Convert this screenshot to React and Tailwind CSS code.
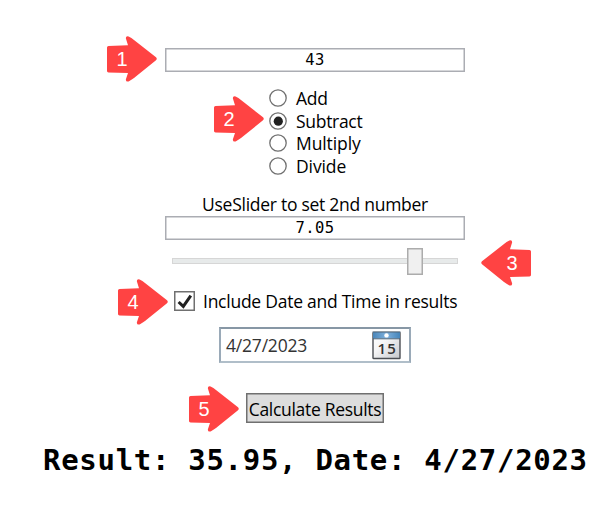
import React from "react";

function Callout({ n, place, flip }) {
  return (
    <div className={`absolute h-[46px] w-[50px] ${place}`}>
      <svg viewBox="0 0 50 46" className={`h-full w-full ${flip ? "-scale-x-100" : ""}`}>
        <path
          d="M1.5 10.1 L21 9.2 L18.9 2.6 Q18.6 -0.4 21.6 0.4 Q24.5 1.8 27 3.9 L49 21.3 Q50.5 22.8 49 24.3 L27 42 Q24.5 44 21.6 45.4 Q18.6 46.2 18.9 43.2 L21 37 L1.5 36.5 Q0 36.4 0 35 V11.5 Q0 10.2 1.5 10.1Z"
          fill="#ff4343"
        />
      </svg>
      <span
        className={`absolute top-[12px] w-[16px] text-center font-['Liberation_Sans',sans-serif] text-[20px] leading-[23px] text-white ${flip ? "left-[23px]" : "left-[7px]"}`}
      >
        {n}
      </span>
    </div>
  );
}

function Radio({ label, checked, tracking }) {
  return (
    <div className="flex h-[22.5px] items-center gap-[9px]">
      <svg viewBox="0 0 18 18" className="size-[18px] shrink-0">
        <circle cx="9" cy="9" r="8.2" fill="#fff" stroke="#707070" strokeWidth="1.3" />
        {checked && <circle cx="9.3" cy="9.2" r="4.6" fill="#212121" />}
      </svg>
      <span className={`whitespace-nowrap ${tracking}`}>{label}</span>
    </div>
  );
}

function NumberField({ value }) {
  return (
    <div className="flex h-[24px] w-[300px] items-center justify-center border border-[#abadb3] pt-[2px] font-['DejaVu_Sans_Mono',monospace] text-[15.5px] leading-none tracking-[0.4px] shadow-[inset_0_0_0_0.5px_#abadb3]">
      {value}
    </div>
  );
}

function CalendarIcon() {
  return (
    <svg viewBox="0 0 30 29" className="h-[29px] w-[30px]">
      <defs>
        <linearGradient id="page" x1="0" y1="0" x2="1" y2="1">
          <stop offset="0" stopColor="#fff" />
          <stop offset="0.4" stopColor="#f6f6f7" />
          <stop offset="1" stopColor="#c5c7cb" />
        </linearGradient>
        <linearGradient id="band" x1="0" y1="0" x2="1" y2="0">
          <stop offset="0" stopColor="#4a86b9" />
          <stop offset="0.5" stopColor="#7eb0dc" />
          <stop offset="1" stopColor="#4585ba" />
        </linearGradient>
      </defs>
      <rect x="1" y="1.5" width="27" height="26" rx="0.5" fill="url(#page)" stroke="#4c4f54" strokeWidth="1.4" />
      <rect x="1" y="1" width="27" height="6.5" fill="url(#band)" />
      <path d="M0.5 1H28.5M1 7.8H28" stroke="#4e6478" strokeWidth="1" />
      <circle cx="14.5" cy="4.4" r="2.2" fill="#fff" />
      <text x="5.4" y="23" fontFamily="Open Sans, sans-serif" fontWeight="600" fontSize="15" textLength="18.5" fill="#333">
        15
      </text>
    </svg>
  );
}

export default function App() {
  return (
    <main className="relative flex h-[527px] w-[607px] flex-col overflow-hidden bg-white font-['Open_Sans','Noto_Sans',sans-serif] text-[17.5px] leading-[22px] text-black">
      <section className="ml-[165px] flex w-[300px] flex-col pt-[48px]">
        <NumberField value="43" />
        <div className="ml-[104px] mt-[15px] flex flex-col">
          <Radio label="Add" tracking="tracking-[-0.2px]" />
          <Radio label="Subtract" checked tracking="tracking-[-0.3px]" />
          <Radio label="Multiply" tracking="tracking-[-0.1px]" />
          <Radio label="Divide" tracking="tracking-[-0.1px]" />
        </div>
        <div className="mt-[16px] h-[22px] whitespace-nowrap text-center tracking-[-0.27px]">UseSlider to set 2nd number</div>
        <div className="mt-[1px]">
          <NumberField value="7.05" />
        </div>
        <div className="ml-[7px] mt-[8px] flex h-[27px] w-[286px] items-center">
          <span className="-mt-[2px] h-[6px] w-[235px] border border-r-0 border-[#d6d6d6] bg-[#e7eaea]" />
          <span className="h-[27px] w-[16px] border border-[#acacac] bg-[#f0f0f0] shadow-[inset_0_0_0_0.5px_#acacac]" />
          <span className="-mt-[2px] h-[6px] w-[35px] border border-l-0 border-[#d6d6d6] bg-[#e7eaea]" />
        </div>
        <div className="ml-[9px] mt-[16px] flex h-[20px] items-center gap-[8px]">
          <span className="flex h-[20px] w-[21px] shrink-0 items-center justify-center border border-[#707070] shadow-[inset_0_0_0_0.5px_#707070]">
            <svg viewBox="0 0 18 17" className="h-[17px] w-[18px]">
              <path d="M2.6 9 L7.3 13.4 L14.8 2.6" fill="none" stroke="#212121" strokeWidth="3" />
            </svg>
          </span>
          <span className="whitespace-nowrap tracking-[-0.25px]">Include Date and Time in results</span>
        </div>
        <div className="ml-[54px] mt-[16px] flex h-[36px] w-[192px] items-center justify-between border-2 border-b-[#b0bec9] border-l-[#9aaab8] border-r-[#9aaab8] border-t-[#8797a5] pl-[5px] pr-[7px] text-[#333]">
          <span className="whitespace-nowrap tracking-[-0.2px]">4/27/2023</span>
          <CalendarIcon />
        </div>
        <button className="ml-[81px] mt-[30px] flex h-[30px] w-[138px] items-center justify-center whitespace-nowrap border border-[#707070] bg-[#ddd] pt-[2px] tracking-[-0.3px] shadow-[inset_0_0_0_0.5px_#707070]">
          Calculate Results
        </button>
      </section>
      <h1 className="ml-[43px] mt-[19px] whitespace-nowrap font-['DejaVu_Sans_Mono',monospace] text-[29px] font-bold leading-[36px] tracking-[0.7px]">
        Result: 35.95, Date: 4/27/2023
      </h1>
      <Callout n="1" place="left-[107px] top-[36px]" />
      <Callout n="2" place="left-[214px] top-[96px]" />
      <Callout n="3" place="left-[481px] top-[240px]" flip />
      <Callout n="4" place="left-[118px] top-[279px]" />
      <Callout n="5" place="left-[189px] top-[386px]" />
    </main>
  );
}
